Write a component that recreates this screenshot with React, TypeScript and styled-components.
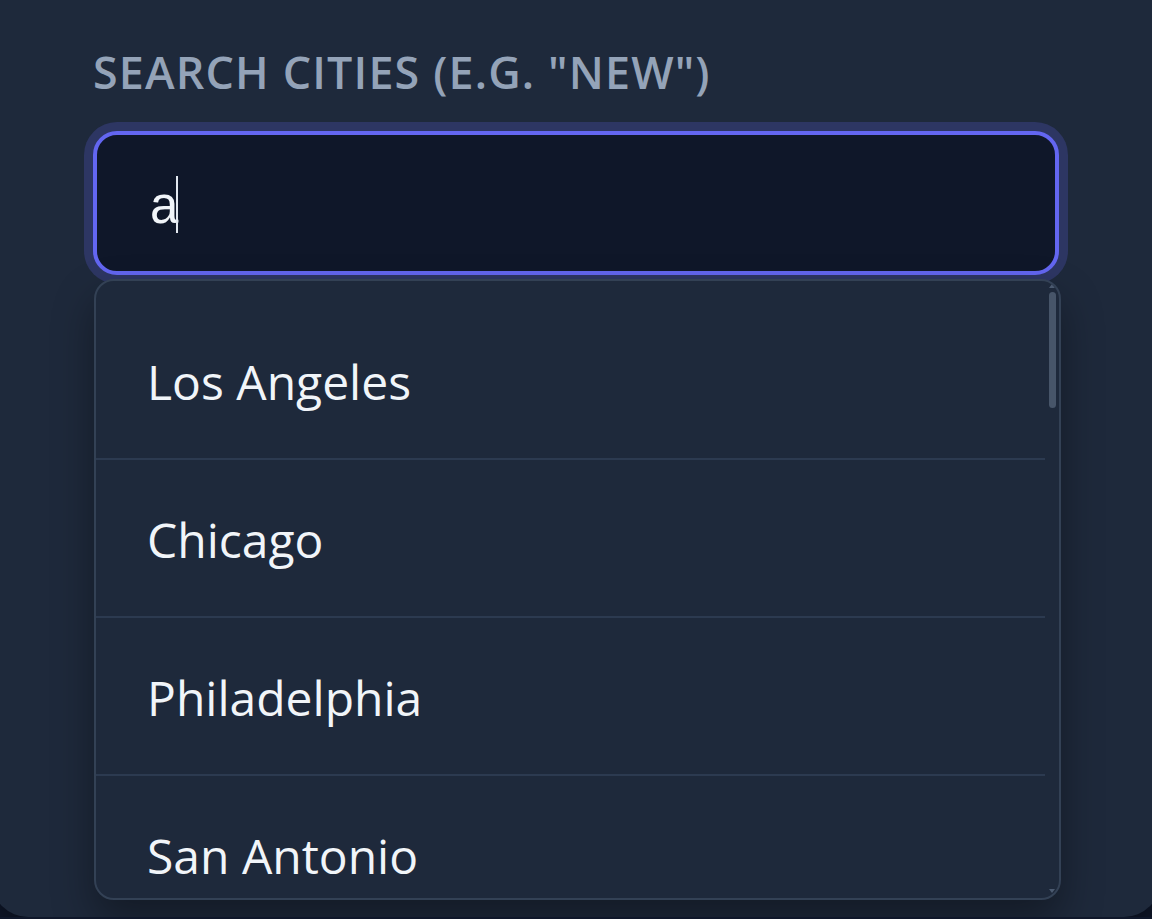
import React from "react";
import styled, { createGlobalStyle } from "styled-components";

const GlobalStyle = createGlobalStyle`
  html, body {
    margin: 0;
    padding: 0;
    background: #0f172a;
    overflow: hidden;
  }
`;

const Card = styled.div`
  box-sizing: border-box;
  margin: 0 -8px;
  height: 917px;
  padding: 41px 101px 0;
  background: #1e293b;
  border-radius: 0 0 36px 36px;
  box-shadow: 0 10px 30px rgba(0, 0, 0, 0.4);
`;

const Label = styled.label`
  display: block;
  font-family: "Open Sans", "Noto Sans", sans-serif;
  font-size: 44.8px;
  line-height: 1.4;
  font-weight: 600;
  letter-spacing: 0.026em;
  text-transform: uppercase;
  color: #94a3b8;
`;

const Field = styled.div`
  position: relative;
  display: flex;
  flex-direction: column;
  gap: 4px;
  margin-top: 27px;
`;

const Input = styled.input`
  box-sizing: border-box;
  display: block;
  width: 966px;
  height: 144px;
  padding: 6px 0 0 53px;
  border: 4px solid #6366f1;
  border-radius: 24px;
  background: #0f1729;
  color: #f1f5f9;
  caret-color: transparent;
  font-family: "Liberation Sans", Arial, sans-serif;
  font-size: 51px;
  outline: none;
  box-shadow: 0 0 0 9px rgba(99, 102, 241, 0.22);
`;

// the caret drawn over the input, headless browsers skip the real one
const Caret = styled.span`
  position: absolute;
  left: 83px;
  top: 45px;
  width: 1.5px;
  height: 57px;
  background: #e2e8f0;
  pointer-events: none;
`;

const Dropdown = styled.div`
  box-sizing: border-box;
  display: flex;
  width: 967px;
  height: 621px;
  margin-left: 1px;
  background: #1e293b;
  border: 2px solid #334155;
  border-radius: 20px;
  overflow: hidden;
  box-shadow: 0 20px 40px rgba(0, 0, 0, 0.35);
`;

const List = styled.ul`
  flex: 1;
  margin: 0;
  padding: 21px 0 0;
  list-style: none;
  overflow-y: auto;
  scrollbar-width: none;
  &::-webkit-scrollbar {
    display: none;
  }
`;

const Item = styled.li<{ last?: boolean }>`
  box-sizing: border-box;
  display: flex;
  align-items: center;
  height: 158px;
  padding: 4px 0 0 51px;
  border-bottom: ${p => (p.last ? "none" : "2px solid #2c3a50")};
  font-family: "Open Sans", "Noto Sans", sans-serif;
  font-size: 48px;
  color: #f1f5f9;
  cursor: pointer;
`;

const Rail = styled.div`
  display: flex;
  flex-direction: column;
  align-items: center;
  width: 14px;
  padding: 3px 0 5px;
  box-sizing: border-box;
`;

const Thumb = styled.div`
  width: 7px;
  height: 116px;
  margin-top: 4px;
  border-radius: 4px;
  background: #475569;
`;

const Spacer = styled.div`
  flex: 1;
`;

const Arrow = styled.div<{ down?: boolean }>`
  width: 0;
  height: 0;
  border-left: 3px solid transparent;
  border-right: 3px solid transparent;
  ${p =>
    p.down ? "border-top: 4px solid #4b5a70;" : "border-bottom: 4px solid #4b5a70;"}
`;

const cities = [
  "Los Angeles",
  "Chicago",
  "Philadelphia",
  "San Antonio",
  "San Diego",
  "Dallas",
  "San Jose",
  "Jacksonville",
  "Charlotte",
  "Indianapolis",
  "San Francisco",
  "Seattle",
  "Washington",
  "Nashville",
  "Oklahoma City",
  "Las Vegas",
  "Portland",
  "Baltimore",
  "Atlanta",
  "Albuquerque",
];

export default function App() {
  return (
    <>
      <GlobalStyle />
      <Card>
        <Label htmlFor="city">Search cities (e.g. "new")</Label>
        <Field>
          <Input id="city" defaultValue="a" autoFocus />
          <Caret />
          <Dropdown>
            <List>
              {cities.map((c, i) => (
                <Item key={c} last={i === cities.length - 1}>
                  {c}
                </Item>
              ))}
            </List>
            <Rail>
              <Arrow />
              <Thumb />
              <Spacer />
              <Arrow down />
            </Rail>
          </Dropdown>
        </Field>
      </Card>
    </>
  );
}
